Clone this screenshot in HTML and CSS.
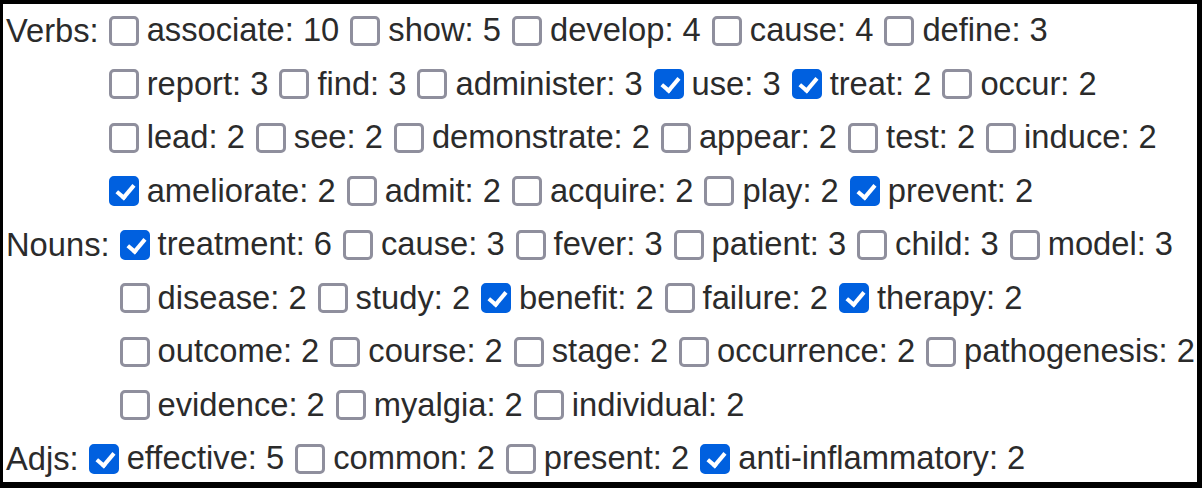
FILE: index.html
```html
<!DOCTYPE html>
<html>
<head>
<meta charset="utf-8">
<title>Keyword filter</title>
<link rel="stylesheet" href="styles.css">
</head>
<body>
<div class="panel">

  <div class="group">
    <span class="label">Verbs:</span>
    <div class="items">
      <div class="row">
        <label class="item"><input type="checkbox">associate: 10</label>
        <label class="item"><input type="checkbox">show: 5</label>
        <label class="item"><input type="checkbox">develop: 4</label>
        <label class="item"><input type="checkbox">cause: 4</label>
        <label class="item"><input type="checkbox">define: 3</label>
      </div>
      <div class="row">
        <label class="item"><input type="checkbox">report: 3</label>
        <label class="item"><input type="checkbox">find: 3</label>
        <label class="item"><input type="checkbox">administer: 3</label>
        <label class="item"><input type="checkbox" checked>use: 3</label>
        <label class="item"><input type="checkbox" checked>treat: 2</label>
        <label class="item"><input type="checkbox">occur: 2</label>
      </div>
      <div class="row">
        <label class="item"><input type="checkbox">lead: 2</label>
        <label class="item"><input type="checkbox">see: 2</label>
        <label class="item"><input type="checkbox">demonstrate: 2</label>
        <label class="item"><input type="checkbox">appear: 2</label>
        <label class="item"><input type="checkbox">test: 2</label>
        <label class="item"><input type="checkbox">induce: 2</label>
      </div>
      <div class="row">
        <label class="item"><input type="checkbox" checked>ameliorate: 2</label>
        <label class="item"><input type="checkbox">admit: 2</label>
        <label class="item"><input type="checkbox">acquire: 2</label>
        <label class="item"><input type="checkbox">play: 2</label>
        <label class="item"><input type="checkbox" checked>prevent: 2</label>
      </div>
    </div>
  </div>

  <div class="group">
    <span class="label">Nouns:</span>
    <div class="items">
      <div class="row">
        <label class="item"><input type="checkbox" checked>treatment: 6</label>
        <label class="item"><input type="checkbox">cause: 3</label>
        <label class="item"><input type="checkbox">fever: 3</label>
        <label class="item"><input type="checkbox">patient: 3</label>
        <label class="item"><input type="checkbox">child: 3</label>
        <label class="item"><input type="checkbox">model: 3</label>
      </div>
      <div class="row">
        <label class="item"><input type="checkbox">disease: 2</label>
        <label class="item"><input type="checkbox">study: 2</label>
        <label class="item"><input type="checkbox" checked>benefit: 2</label>
        <label class="item"><input type="checkbox">failure: 2</label>
        <label class="item"><input type="checkbox" checked>therapy: 2</label>
      </div>
      <div class="row">
        <label class="item"><input type="checkbox">outcome: 2</label>
        <label class="item"><input type="checkbox">course: 2</label>
        <label class="item"><input type="checkbox">stage: 2</label>
        <label class="item"><input type="checkbox">occurrence: 2</label>
        <label class="item"><input type="checkbox">pathogenesis: 2</label>
      </div>
      <div class="row">
        <label class="item"><input type="checkbox">evidence: 2</label>
        <label class="item"><input type="checkbox">myalgia: 2</label>
        <label class="item"><input type="checkbox">individual: 2</label>
      </div>
    </div>
  </div>

  <div class="group">
    <span class="label">Adjs:</span>
    <div class="items">
      <div class="row">
        <label class="item"><input type="checkbox" checked>effective: 5</label>
        <label class="item"><input type="checkbox">common: 2</label>
        <label class="item"><input type="checkbox">present: 2</label>
        <label class="item"><input type="checkbox" checked>anti-inflammatory: 2</label>
      </div>
    </div>
  </div>

</div>
</body>
</html>
```

FILE: styles.css
```css
html {
  background: #fff;
}

body {
  margin: 0;
  color: #2b2b2b;
  font: 32.7px/1 "Liberation Sans", Arial, sans-serif;
}

.panel {
  border-style: solid;
  border-color: #000;
  border-width: 4px 5px 6px 3px;
  height: 488px;
  box-sizing: border-box;
  overflow: hidden;
  padding-left: 3px;
}

.group {
  display: flex;
  align-items: flex-start;
}

.label {
  height: 53.5px;
  line-height: 53.5px;
  white-space: nowrap;
  margin-right: 10px;
}

.row {
  display: flex;
  align-items: center;
  height: 53.5px;
  gap: 11px;
  white-space: nowrap;
}

.item {
  display: flex;
  align-items: center;
  gap: 8px;
}

/* checkbox drawn like the Firefox one */
input[type="checkbox"] {
  appearance: none;
  -webkit-appearance: none;
  margin: 0;
  width: 30px;
  height: 30px;
  border: 3px solid #8f8f9d;
  border-radius: 5px;
  background: #fff;
  box-sizing: border-box;
  position: relative;
}

input[type="checkbox"]:checked {
  background: #0060df;
  border-color: #0060df;
}

input[type="checkbox"]:checked::after {
  content: "";
  position: absolute;
  left: 8px;
  top: 2px;
  width: 7px;
  height: 14px;
  border: solid #fff;
  border-width: 0 4px 4px 0;
  transform: rotate(40deg);
}
```
